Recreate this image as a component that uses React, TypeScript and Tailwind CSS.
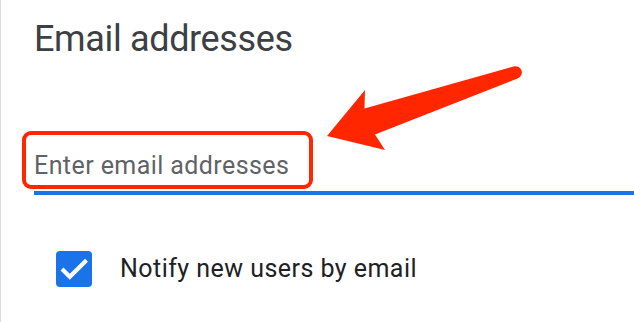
import React from "react";

export default function App() {
  return (
    <div className="relative w-[634px] h-[322px] bg-white overflow-hidden" style={{ fontFamily: "Roboto, 'Liberation Sans', sans-serif" }}>
      <div className="h-full border-l border-[#dadce0] pl-[33px] pt-[17px] flex flex-col">
        <h1 className="text-[36px] leading-[44px] font-normal text-[#3c4043] tracking-[-0.35px]">Email addresses</h1>
        <div className="mt-[89px] border-b-4 border-[#1a73e8] pb-[9px]">
          <input
            className="w-full h-[32px] text-[25px] leading-[32px] tracking-[0.42px] text-[#202124] placeholder:text-[#5f6368] outline-none bg-transparent"
            placeholder="Enter email addresses"
          />
        </div>
        <label className="mt-[56px] ml-[22px] flex items-center gap-[28px]">
          <span className="w-[36px] h-[36px] rounded-[4px] bg-[#1a73e8] flex items-center justify-center">
            <svg width="36" height="36" viewBox="0 0 36 36">
              <polyline points="7.5,19.5 13.8,25.8 29,10.8" fill="none" stroke="white" strokeWidth="4.2" strokeLinecap="square" />
            </svg>
          </span>
          <span className="text-[25px] leading-[32px] tracking-[0.46px] text-[#202124]">Notify new users by email</span>
        </label>
      </div>
      <div className="absolute left-[22px] top-[131px] w-[291px] h-[58px] border-4 border-[#ff2600] rounded-[9px] pointer-events-none" />
      <svg className="absolute left-0 top-0 pointer-events-none" width="634" height="322" viewBox="0 0 634 322">
        <path d="M327,136 L365,90 L364.5,108.5 L513.5,66.5 A6.2,6.2 0 0 1 517.5,78.5 L375,134.5 L385,150 Z" fill="#ff2600" />
      </svg>
    </div>
  );
}
